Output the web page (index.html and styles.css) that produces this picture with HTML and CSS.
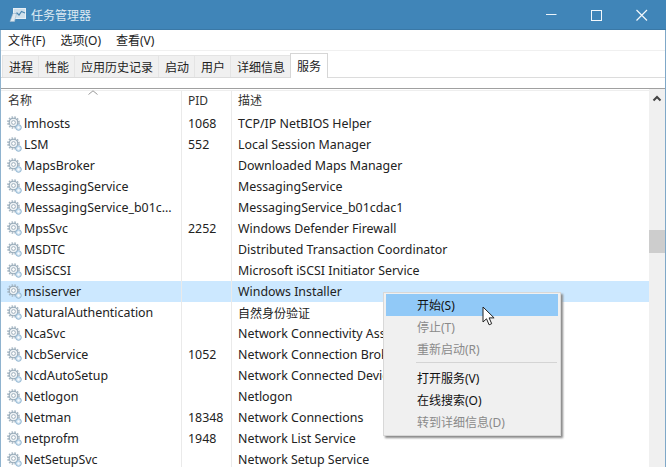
FILE: index.html
```html
<!DOCTYPE html>
<html lang="zh">
<head>
<meta charset="utf-8">
<title>任务管理器</title>
<link rel="stylesheet" href="styles.css">
</head>
<body>
<svg class="defs" width="0" height="0" aria-hidden="true">
  <defs>
    <symbol id="gear" viewBox="0 0 16 16">
      <circle cx="6.500" cy="6.500" r="4.300" fill="#eef2f5" stroke="#94a7b6" stroke-width="1.100"/>
      <circle cx="6.500" cy="6.500" r="5.500" fill="none" stroke="#a3b4c1" stroke-width="1.600" stroke-dasharray="1.600 1.300"/>
      <circle cx="6.500" cy="6.500" r="1.900" fill="#fff" stroke="#a0b1be"/>
      <circle cx="11.500" cy="11.500" r="2.800" fill="#d5e6f3" stroke="#8fb4d0"/>
      <circle cx="11.500" cy="11.500" r="1" fill="#fff"/>
    </symbol>
  </defs>
</svg>
<div class="window">
  <header class="titlebar">
    <svg class="appicon" width="18" height="16" viewBox="0 0 18 16">
      <rect x="4.500" y="1.500" width="12" height="10" fill="#cfe0ec" stroke="#e8f0f6"/>
      <path d="M5 8l3-2 2 2 2.500-3.500L16 6" fill="none" stroke="#4c87b2" stroke-width="1.200"/>
      <path d="M1 14.500l3-8h3.500l-2 8z" fill="#dfe9f0" stroke="#9fb9cd" stroke-width=".6"/>
    </svg>
    <span class="title">任务管理器</span>
    <div class="controls">
      <svg class="ctl" width="12" height="12" viewBox="0 0 12 12"><path d="M0 5.500h10.500" stroke="#eaf3f9" stroke-width="1"/></svg>
      <svg class="ctl" width="12" height="12" viewBox="0 0 12 12"><rect x=".5" y="1.500" width="10" height="10" fill="none" stroke="#f2f8fc"/></svg>
      <svg class="ctl" width="12" height="12" viewBox="0 0 12 12"><path d="M.5 1l10.500 10.500M11 1L.5 11.500" stroke="#f2f8fc" stroke-width="1.200"/></svg>
    </div>
  </header>
  <nav class="menubar">
    <span>文件(F)</span><span>选项(O)</span><span>查看(V)</span>
  </nav>
  <div class="tabs">
    <span class="tab">进程</span><span class="tab">性能</span><span class="tab">应用历史记录</span><span class="tab">启动</span><span class="tab">用户</span><span class="tab">详细信息</span><span class="tab active">服务</span>
  </div>
  <div class="panel">
    <div class="list">
      <div class="head">
        <span class="sort"><svg width="10" height="5" viewBox="0 0 10 5"><path d="M.5 4.500L5 .8l4.500 3.700" fill="none" stroke="#9a9a9a"/></svg></span>
        <span class="c1">名称</span><span class="c2">PID</span><span class="c3">描述</span>
      </div>
      <div class="row"><span class="c1"><svg class="gear"><use href="#gear"/></svg>lmhosts</span><span class="c2">1068</span><span class="c3">TCP/IP NetBIOS Helper</span></div>
      <div class="row"><span class="c1"><svg class="gear"><use href="#gear"/></svg>LSM</span><span class="c2">552</span><span class="c3">Local Session Manager</span></div>
      <div class="row"><span class="c1"><svg class="gear"><use href="#gear"/></svg>MapsBroker</span><span class="c2"></span><span class="c3">Downloaded Maps Manager</span></div>
      <div class="row"><span class="c1"><svg class="gear"><use href="#gear"/></svg>MessagingService</span><span class="c2"></span><span class="c3">MessagingService</span></div>
      <div class="row"><span class="c1"><svg class="gear"><use href="#gear"/></svg>MessagingService_b01c...</span><span class="c2"></span><span class="c3">MessagingService_b01cdac1</span></div>
      <div class="row"><span class="c1"><svg class="gear"><use href="#gear"/></svg>MpsSvc</span><span class="c2">2252</span><span class="c3">Windows Defender Firewall</span></div>
      <div class="row"><span class="c1"><svg class="gear"><use href="#gear"/></svg>MSDTC</span><span class="c2"></span><span class="c3">Distributed Transaction Coordinator</span></div>
      <div class="row"><span class="c1"><svg class="gear"><use href="#gear"/></svg>MSiSCSI</span><span class="c2"></span><span class="c3">Microsoft iSCSI Initiator Service</span></div>
      <div class="row selected"><span class="c1"><svg class="gear"><use href="#gear"/></svg>msiserver</span><span class="c2"></span><span class="c3">Windows Installer</span></div>
      <div class="row"><span class="c1"><svg class="gear"><use href="#gear"/></svg>NaturalAuthentication</span><span class="c2"></span><span class="c3 cjk">自然身份验证</span></div>
      <div class="row"><span class="c1"><svg class="gear"><use href="#gear"/></svg>NcaSvc</span><span class="c2"></span><span class="c3">Network Connectivity Assistant</span></div>
      <div class="row"><span class="c1"><svg class="gear"><use href="#gear"/></svg>NcbService</span><span class="c2">1052</span><span class="c3">Network Connection Broker</span></div>
      <div class="row"><span class="c1"><svg class="gear"><use href="#gear"/></svg>NcdAutoSetup</span><span class="c2"></span><span class="c3">Network Connected Devices Auto-Setup</span></div>
      <div class="row"><span class="c1"><svg class="gear"><use href="#gear"/></svg>Netlogon</span><span class="c2"></span><span class="c3">Netlogon</span></div>
      <div class="row"><span class="c1"><svg class="gear"><use href="#gear"/></svg>Netman</span><span class="c2">18348</span><span class="c3">Network Connections</span></div>
      <div class="row"><span class="c1"><svg class="gear"><use href="#gear"/></svg>netprofm</span><span class="c2">1948</span><span class="c3">Network List Service</span></div>
      <div class="row"><span class="c1"><svg class="gear"><use href="#gear"/></svg>NetSetupSvc</span><span class="c2"></span><span class="c3">Network Setup Service</span></div>
    </div>
    <div class="scrollbar">
      <svg class="arrow" width="10" height="7" viewBox="0 0 10 7"><path d="M1.500 5.500L5 2l3.500 3.500" fill="none" stroke="#444" stroke-width="2"/></svg>
      <div class="thumb"></div>
    </div>
  </div>
</div>
<div class="ctxmenu">
  <div class="item hot">开始(S)</div>
  <div class="item off">停止(T)</div>
  <div class="item off">重新启动(R)</div>
  <div class="sep"></div>
  <div class="item">打开服务(V)</div>
  <div class="item">在线搜索(O)</div>
  <div class="item off">转到详细信息(D)</div>
</div>
<svg class="cursor" width="14" height="20" viewBox="0 0 14 20"><path d="M1 1v15l3.500-3.200 2.600 6 2.600-1.100-2.600-5.800h5z" fill="#fff" stroke="#222" stroke-width="1"/></svg>
</body>
</html>
```
FILE: styles.css
```css
* { box-sizing: border-box; }
html, body { margin: 0; height: 467px; overflow: hidden; }
body {
  width: 666px;
  position: relative;
  background: #fff;
  font-family: "Noto Sans", "Noto Sans CJK SC", sans-serif;
  font-size: 12px;
  color: #222;
}
.defs { position: absolute; }
.window {
  display: flex;
  flex-direction: column;
  height: 467px;
  border-left: 1px solid #8fb3cf;
  border-right: 1px solid #7fa8c8;
}
.titlebar {
  height: 30px;
  margin: 0 -1px;
  background: #4085b8;
  border-bottom: 1px solid #3a78a6;
  display: flex;
  align-items: center;
  padding-left: 9px;
  color: #dce9f2;
  font-size: 12px;
  flex: none;
}
.appicon { margin-right: 4px; }
.controls {
  margin-left: auto;
  display: flex;
  align-items: center;
  gap: 33px;
  padding-right: 18px;
}
.controls .ctl { display: block; }
.menubar {
  height: 21px;
  display: flex;
  align-items: center;
  gap: 15px;
  padding-left: 7px;
  background: #fff;
  border-bottom: 1px solid #f0f0f0;
  font-size: 12px;
  flex: none;
}
.tabs {
  height: 27px;
  flex: none;
  padding: 2px 0 0 1px;
  display: flex;
  align-items: flex-end;
  background: #fff;
  border-bottom: 1px solid #dcdcdc;
}
.tab {
  height: 22px;
  padding: 0 5px 0 6px;
  display: flex;
  align-items: center;
  background: #f0f0f0;
  border: 1px solid #e4e4e4;
  border-bottom: 0;
  margin-right: -1px;
  font-size: 12px;
}
.tab.active {
  height: 25px;
  background: #fff;
  border-color: #d6d6d6;
  padding: 0 6px 1px;
  margin-bottom: -1px;
  position: relative;
}
.panel {
  margin-top: 10px;
  border-top: 1px solid #a0a0a0;
  flex: 1;
  min-height: 0;
  display: flex;
}
.list { flex: 1; min-width: 0; position: relative; font-size: 12.4px; }
.head, .row {
  display: grid;
  grid-template-columns: 181px 50px 1fr;
  align-items: center;
}
.head {
  height: 24px;
  position: relative;
  color: #333;
  font-size: 12px;
  border-top: 1px solid #eee;
  margin-top: 1px;
  margin-bottom: -1px;
}
.head span { padding-bottom: 5px; }
.sort { position: absolute; left: 87px; top: -1px; display: flex; }
.row { height: 21px; }
.c1 { display: flex; align-items: center; padding-left: 7px; white-space: nowrap; height: 100%; border-right: 1px solid #eaeaea; }
.c2 { padding-left: 6px; height: 100%; display: flex; align-items: center; border-right: 1px solid #eaeaea; }
.c3 { padding-left: 6px; white-space: nowrap; height: 100%; display: flex; align-items: center; overflow: hidden; }
.cjk { font-size: 12px; }
.row .c1 { padding-left: 6px; }
.gear { width: 16px; height: 16px; margin-right: 1px; flex: none; }
.selected { background: #cce8ff; }
.scrollbar {
  width: 16px;
  flex: none;
  background: #f0f0f0;
  position: relative;
  display: flex;
  flex-direction: column;
  align-items: center;
  padding-top: 6px;
}
.thumb {
  position: absolute;
  top: 141px;
  left: 0;
  width: 16px;
  height: 23px;
  background: #cdcdcd;
}
.ctxmenu {
  position: absolute;
  left: 383px;
  top: 292px;
  width: 178px;
  height: 144px;
  padding: 1px 2px;
  background: #f0f0f0;
  border: 1px solid #d8d8d8;
  box-shadow: 2px 2px 2px #8a8a8a;
}
.item {
  height: 22px;
  padding-left: 31px;
  display: flex;
  align-items: center;
  color: #111;
}
.item.hot { background: #91c9f7; }
.item.off { color: #8a8a8a; }
.sep { height: 1px; background: #d4d4d4; margin: 2px 1px 4px 30px; }
.cursor { position: absolute; left: 482px; top: 306px; }
```
